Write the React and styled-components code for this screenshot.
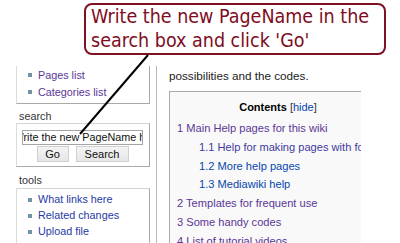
import React from "react";
import styled, { createGlobalStyle } from "styled-components";

const Global = createGlobalStyle`
  html, body { margin: 0; padding: 0; background: #fff; }
  body { font-family: "Liberation Sans", Arial, sans-serif; }
`;

const Screen = styled.div`
  position: relative;
  width: 400px;
  height: 243px;
  overflow: hidden;
  background: #fff;
`;

const Page = styled.div`
  display: flex;
  align-items: flex-start;
  padding-top: 66px;
`;

const Sidebar = styled.div`
  width: 134px;
  margin-left: 16px;
  flex-shrink: 0;
  font-size: 10.8px;
`;

const Portlet = styled.div`
  background: #fff;
  border-left: 1px solid #dcdcdc;
  border-right: 1px solid #aaa;
  border-bottom: 1px solid #aaa;
  border-top: ${(p) => (p.$noTop ? "none" : "1px solid #d4d4d4")};
  padding: ${(p) => p.$pad || "0"};
`;

const Heading = styled.div`
  margin: ${(p) => p.$m || "6px 0 0 3px"};
  height: 13px;
  line-height: 13px;
  color: #333;
  font-size: 10.8px;
`;

const List = styled.ul`
  list-style: none;
  margin: 0;
  padding: 0 0 0 11px;
`;

const Item = styled.li`
  display: flex;
  align-items: center;
  height: ${(p) => p.$h || 17}px;
  color: ${(p) => (p.$visited ? "#5a3696" : "#1f3aa4")};
  white-space: nowrap;
  &::before {
    content: "";
    width: 4px;
    height: 4px;
    background: #7392a4;
    margin-right: 6px;
    margin-top: 1px;
    flex-shrink: 0;
  }
`;

const SearchInput = styled.div`
  margin: 0 6px 0 5px;
  height: 13px;
  border: 1px solid #a4a4a4;
  background: #fff;
  font-size: 10.8px;
  line-height: 13px;
  padding-left: 2px;
  color: #111;
  white-space: nowrap;
  overflow: hidden;
  text-indent: -11.6px;
`;

const Buttons = styled.div`
  display: flex;
  justify-content: center;
  gap: 7px;
  margin-top: 1px;
  padding-right: 1px;
`;

const Button = styled.div`
  width: ${(p) => p.$w}px;
  height: 14px;
  border: 1px solid #d0d0d0;
  background: linear-gradient(#f4f4f4, #e6e6e6);
  font-size: 11px;
  line-height: 14px;
  text-align: center;
  color: #111;
  box-sizing: content-box;
`;

const Content = styled.div`
  margin-left: 6px;
  width: 192px;
  height: 177px;
  border-left: 1px solid #b8b8b8;
  padding: 2px 0 0 12px;
  overflow: hidden;
  flex-shrink: 0;
`;

const Para = styled.div`
  font-size: 11.7px;
  line-height: 16px;
  color: #222;
  white-space: nowrap;
`;

const Toc = styled.div`
  margin-top: 7px;
  width: 218px;
  border: 1px solid #aaa;
  background: #f9f9f9;
  padding: 7px 0 0 7px;
  box-sizing: border-box;
  height: 200px;
`;

const TocTitle = styled.div`
  text-align: center;
  font-size: 11px;
  line-height: 16px;
  padding-right: 7px;
  color: #000;
  b { font-weight: bold; }
`;

const Toggle = styled.span`
  color: #0645ad;
  margin-left: 3px;
  &::before { content: "["; color: #333; }
  &::after { content: "]"; color: #333; }
`;

const TocList = styled.div`
  margin-top: 4px;
`;

const TocEntry = styled.div`
  height: 18.8px;
  line-height: 18.8px;
  font-size: 11.1px;
  white-space: nowrap;
  padding-left: ${(p) => (p.$sub ? 22 : 0)}px;
  color: ${(p) => p.$color};
`;

const Callout = styled.div`
  position: absolute;
  left: 84px;
  top: 3px;
  width: 293px;
  height: 48px;
  border: 2px solid #7e1223;
  border-radius: 8px;
  background: #fff;
  padding: 0 0 0 5px;
  font-family: "DejaVu Sans Condensed", "DejaVu Sans", sans-serif;
  font-stretch: condensed;
  font-size: 19.5px;
  line-height: 24px;
  color: #7e0d22;
  white-space: nowrap;
  box-sizing: content-box;
`;

const Pointer = styled.svg`
  position: absolute;
  left: 0;
  top: 0;
  pointer-events: none;
`;

const VISITED = "#5a3696";
const BLUE = "#0645ad";

const toc = [
  { t: "1 Main Help pages for this wiki", c: VISITED },
  { t: "1.1 Help for making pages with formatting", c: "#3f3a9e", sub: true },
  { t: "1.2 More help pages", c: BLUE, sub: true },
  { t: "1.3 Mediawiki help", c: BLUE, sub: true },
  { t: "2 Templates for frequent use", c: VISITED },
  { t: "3 Some handy codes", c: VISITED },
  { t: "4 List of tutorial videos", c: VISITED },
];

export default function App() {
  return (
    <Screen>
      <Global />
      <Page>
        <Sidebar>
          <Portlet $noTop $pad="0 0 3px 0">
            <List>
              <Item $visited>Pages list</Item>
              <Item $visited>Categories list</Item>
            </List>
          </Portlet>
          <Heading>search</Heading>
          <Portlet $pad="6px 0 4px 0">
            <SearchInput>Write the new PageName here</SearchInput>
            <Buttons>
              <Button $w={30}>Go</Button>
              <Button $w={51}>Search</Button>
            </Buttons>
          </Portlet>
          <Heading $m="7px 0 1px 3px">tools</Heading>
          <Portlet $pad="2px 0 6px 0">
            <List>
              <Item $h={16}>What links here</Item>
              <Item $h={16}>Related changes</Item>
              <Item $h={16}>Upload file</Item>
            </List>
          </Portlet>
        </Sidebar>
        <Content>
          <Para>possibilities and the codes.</Para>
          <Toc>
            <TocTitle>
              <b>Contents</b>
              <Toggle>hide</Toggle>
            </TocTitle>
            <TocList>
              {toc.map((e) => (
                <TocEntry key={e.t} $sub={e.sub} $color={e.c}>
                  {e.t}
                </TocEntry>
              ))}
            </TocList>
          </Toc>
        </Content>
      </Page>
      <Callout>
        Write the new PageName in the
        <br />
        search box and click 'Go'
      </Callout>
      <Pointer width="400" height="243" viewBox="0 0 400 243">
        <line x1="148" y1="55" x2="80" y2="134" stroke="#000" strokeWidth="2" />
      </Pointer>
    </Screen>
  );
}
